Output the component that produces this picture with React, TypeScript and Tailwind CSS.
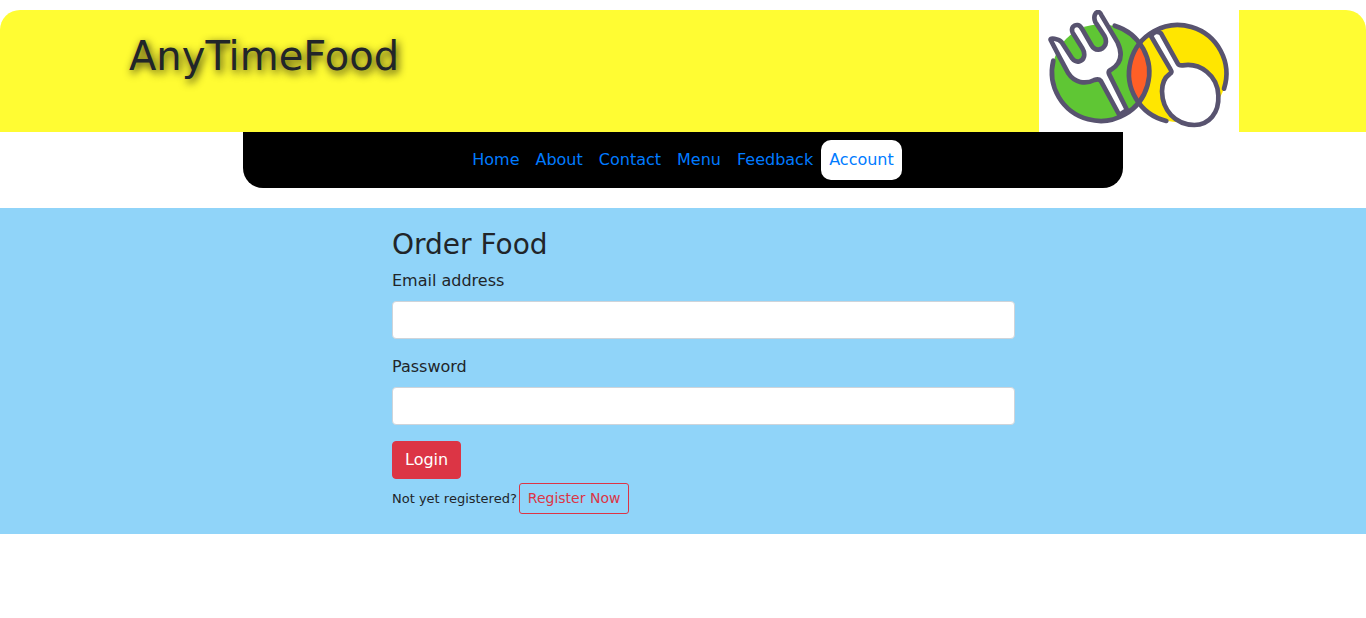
import React from "react";

const links = ["Home", "About", "Contact", "Menu", "Feedback"];

function Logo() {
  return (
    <svg
      viewBox="27 30 600 366"
      role="img"
      aria-label="AnyTimeFood logo"
      className="block h-[122px] w-[200px] shrink-0 bg-white"
      fill="none"
      stroke="#58536f"
      strokeWidth="14"
      strokeLinecap="round"
      strokeLinejoin="round"
    >
      <circle cx="212" cy="218" r="145" fill="#5fc634" stroke="none" />
      <circle cx="443" cy="220" r="146" fill="#ffe600" stroke="none" />
      <path d="M328 131A145 145 0 0 1 328 306A146 146 0 0 1 328 131Z" fill="#ff5f26" stroke="none" />
      <path
        d="M268 345L212 242Q206 235 193 240C166 254 133 248 115 220L88 170L62 120C58 112 86 116 95 127L127 176C139 191 158 185 162 170C164 161 162 153 157 145L128 98C122 84 131 74 143 75C149 76 154 82 157 88L184 135C195 155 217 152 226 134C230 123 228 116 223 107L196 66C189 50 196 35 206 36C211 37 213 42 215 47L263 128C280 165 271 192 243 209Q233 214 238 224L291 330Z"
        fill="#fff"
      />
      <path
        d="M363 108Q376 88 393 100L443 190Q447 197 458 196C510 187 563 226 565 286C568 339 537 375 493 375C435 373 397 331 396 274C396 249 405 232 419 222Q427 217 422 209Z"
        fill="#fff"
      />
      <path d="M254 77A146 146 0 1 1 70 182" />
      <path d="M582 266A146 146 0 1 0 409 363" />
    </svg>
  );
}

export default function App() {
  return (
    <div className="bg-white pt-[10px] font-['DejaVu_Sans',Verdana,sans-serif] text-base text-[#212529]">
      <header className="flex items-start justify-between rounded-t-[20px] bg-[#fffc33] pr-[127px] pl-[129px]">
        <h1 className="pt-[22px] text-[40px] leading-[48px] [text-shadow:2px_3px_8px_#000000dd]">AnyTimeFood</h1>
        <Logo />
      </header>

      <nav className="mx-auto flex max-w-[880px] justify-center rounded-b-[20px] bg-black py-2 text-[#007bff]">
        {links.map((label) => (
          <a key={label} href="#" className="p-2">
            {label}
          </a>
        ))}
        <a href="#" aria-current="page" className="rounded-[10px] bg-white p-2">
          Account
        </a>
      </nav>

      <main className="mt-5 bg-[#90d4f9] py-5">
        <form className="mx-auto max-w-[664px] pl-[41px]">
          <h2 className="mb-[7px] text-[28px] leading-[34px]">Order Food</h2>
          <label htmlFor="email" className="mb-2 block">
            Email address
          </label>
          <input
            id="email"
            type="email"
            className="mb-4 block h-[38px] w-full rounded border border-[#ced4da] bg-white px-3"
          />
          <label htmlFor="password" className="mb-2 block">
            Password
          </label>
          <input
            id="password"
            type="password"
            className="mb-4 block h-[38px] w-full rounded border border-[#ced4da] bg-white px-3"
          />
          <button
            type="button"
            className="block h-[38px] rounded border border-[#dc3545] bg-[#dc3545] px-3 text-white"
          >
            Login
          </button>
          <div className="mt-1 flex items-center gap-[2px]">
            <span className="text-[13px] leading-5">Not yet registered?</span>
            <a
              href="#"
              className="rounded-[3px] border border-[#dc3545] px-2 py-1 text-sm leading-[21px] text-[#dc3545]"
            >
              Register Now
            </a>
          </div>
        </form>
      </main>
    </div>
  );
}
